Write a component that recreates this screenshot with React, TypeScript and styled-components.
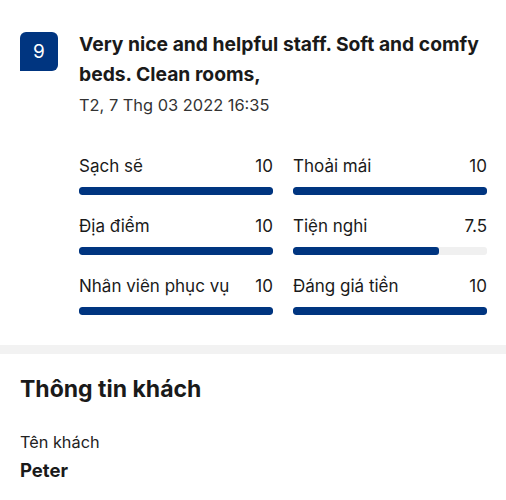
import styled, { createGlobalStyle } from 'styled-components';

const GlobalStyle = createGlobalStyle`
  body {
    margin: 0;
    background: #ffffff;
    font-family: Inter, "Noto Sans", sans-serif;
    color: #1a1a1a;
  }
`;

const Page = styled.div`
  width: 506px;
  height: 500px;
  overflow: hidden;
  background: #fff;
`;

const Review = styled.div`
  display: flex;
  gap: 21px;
  padding: 33px 20px 0 20px;
`;

const Badge = styled.div`
  flex: none;
  width: 38px;
  height: 39px;
  background: #003580;
  color: #fff;
  border-radius: 6px 6px 6px 0;
  display: flex;
  align-items: center;
  justify-content: center;
  font-size: 19px;
  margin-top: -1px;
`;

const Body = styled.div`
  flex: 1;
`;

const Title = styled.div`
  font-size: 19.3px;
  font-weight: 700;
  line-height: 30px;
  margin-top: -4px;
`;

const Date = styled.div`
  font-size: 16.4px;
  line-height: 20px;
  color: #333;
  margin-top: 6px;
`;

const Scores = styled.div`
  display: grid;
  grid-template-columns: 194px 194px;
  column-gap: 20px;
  row-gap: 19px;
  margin-top: 39px;
`;

const Score = styled.div`
  display: flex;
  flex-direction: column;
`;

const ScoreHead = styled.div`
  display: flex;
  justify-content: space-between;
  font-size: 17px;
  line-height: 24px;
`;

const Track = styled.div`
  margin-top: 9px;
  height: 8px;
  border-radius: 3px;
  background: #f0f0f0;
  overflow: hidden;
`;

const Fill = styled.div<{ $value: number }>`
  height: 100%;
  width: ${(p) => p.$value * 10}%;
  background: #003580;
  border-radius: 3px;
`;

const Divider = styled.div`
  height: 9px;
  background: #f2f2f2;
  margin-top: 30px;
`;

const Section = styled.div`
  padding: 20px 20px 0;
`;

const SectionTitle = styled.h2`
  margin: 0;
  font-size: 23px;
  font-weight: 700;
  line-height: 30px;
`;

const FieldLabel = styled.div`
  margin-top: 28px;
  font-size: 16.3px;
  line-height: 20px;
  color: #222;
`;

const FieldValue = styled.div`
  margin-top: 7px;
  font-size: 18.5px;
  font-weight: 700;
  line-height: 22px;
`;

const scores = [
  { label: 'Sạch sẽ', value: 10 },
  { label: 'Thoải mái', value: 10 },
  { label: 'Địa điểm', value: 10 },
  { label: 'Tiện nghi', value: 7.5 },
  { label: 'Nhân viên phục vụ', value: 10 },
  { label: 'Đáng giá tiền', value: 10 },
];

export default function App() {
  return (
    <Page>
      <GlobalStyle />
      <Review>
        <Badge>9</Badge>
        <Body>
          <Title>Very nice and helpful staff. Soft and comfy beds. Clean rooms,</Title>
          <Date>T2, 7 Thg 03 2022 16:35</Date>
          <Scores>
            {scores.map((s) => (
              <Score key={s.label}>
                <ScoreHead>
                  <span>{s.label}</span>
                  <span>{s.value}</span>
                </ScoreHead>
                <Track>
                  <Fill $value={s.value} />
                </Track>
              </Score>
            ))}
          </Scores>
        </Body>
      </Review>
      <Divider />
      <Section>
        <SectionTitle>Thông tin khách</SectionTitle>
        <FieldLabel>Tên khách</FieldLabel>
        <FieldValue>Peter</FieldValue>
      </Section>
    </Page>
  );
}
